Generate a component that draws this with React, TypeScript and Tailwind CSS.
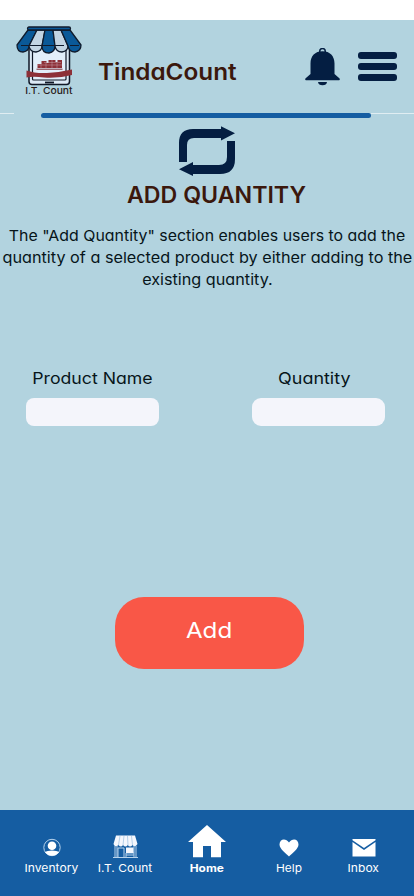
import type { ReactNode } from "react";

function StoreLogo() {
  return (
    <svg width="66" height="60" viewBox="0 0 66 60" fill="none">
      <rect x="13" y="17" width="40.5" height="41.5" rx="3" fill="#dce9f5" stroke="#111827" strokeWidth="1.5" />
      <rect x="16.5" y="22" width="33.5" height="32" rx="1" fill="#e2eefa" stroke="#111827" strokeWidth="1.2" />
      <path d="M29 56.5H38" stroke="#111827" strokeWidth="1.8" />
      <path d="M21.5 42V38h4v-3h5v2h2v-3h7v2h2v-2h4.5v8Z" fill="#8d3038" />
      <path d="M21 39h25M28 36.5h17M25 38v4M30 37v5M36 34v8M41 37v5" stroke="#d6b8c3" strokeWidth=".4" />
      <path d="M20.5 43.2h26" stroke="#7a2a35" strokeWidth="1" />
      <path d="M10.5 44.5Q19 47.5 31 47T56 43.5V49Q43 52.5 28 51.5Q17 50 10.5 51.5Z" fill="#8d3038" />
      <g stroke="#101b2c" strokeWidth="1.3" strokeLinejoin="round">
        <path d="M12 4L1 19Q1 26 7 26Q13 25 13 20L21 4Z" fill="#0a5998" />
        <path d="M21 4L13 20Q14 26 20 26Q26 25 26 20L29 4Z" fill="#c3d5e3" />
        <path d="M29 4L26 20Q26 27 33 27Q39 26 39 20L37 4Z" fill="#0a5998" />
        <path d="M37 4L39 20Q40 26 46 26Q52 25 52 20L45 4Z" fill="#c3d5e3" />
        <path d="M45 4L52 20Q53 26 59 26Q65 25 65 19L54 4Z" fill="#0a5998" />
        <path d="M5 19.5H48M54 19.5H63" strokeWidth="1" />
        <rect x="11.5" y="1" width="43" height="3" rx="1.5" fill="#0a5998" />
      </g>
    </svg>
  );
}

function BellIcon() {
  return (
    <svg width="36" height="39" viewBox="0 0 36 39" fill="#041e42">
      <circle cx="17.5" cy="3.3" r="2.8" fill="none" stroke="#041e42" strokeWidth="1.5" />
      <path d="M17.5 3.2C10 3.2 5.5 8 5.5 15.5V26L.4 30.5Q-.2 32.3 1 32.3H34Q35.2 32.3 34.6 30.5L29.5 26V15.5C29.5 8 25 3.2 17.5 3.2Z" />
      <path d="M13 34H22Q21.5 37.3 17.5 37.3T13 34Z" />
    </svg>
  );
}

function LoopIcon() {
  return (
    <svg width="56" height="50" viewBox="0 0 56 50" fill="#041e42">
      <path d="M0 36V17Q0 3 14 3H42V.2L56 7.3L42 14.5V12H15Q8 12 8 19V36Z" />
      <path d="M56 15V33Q56 48 41 48H14V50L0 43.2L14 36V39H40Q48 39 48 31V15Z" />
    </svg>
  );
}

function NavItem({ label, width, text = "", children }: { label: string; width: string; text?: string; children: ReactNode }) {
  return (
    <a className={`flex h-[66px] flex-col items-center justify-end ${width}`}>
      {children}
      <span className={`mt-[2px] whitespace-nowrap text-[11px] leading-[16px] ${text}`}>{label}</span>
    </a>
  );
}

export default function App() {
  return (
    <div className="flex h-[896px] w-[414px] flex-col overflow-hidden bg-[#b2d3df] pt-5 font-[Inter,sans-serif] text-[#07151a] [background-image:linear-gradient(white_20px,transparent_20px)] [font-feature-settings:'cv11'_1]">
      <header className="flex h-[93px] shrink-0">
        <div className="ml-4 flex w-[66px] flex-col items-center pt-[6px]">
          <StoreLogo />
          <span className="-mt-px -ml-[1px] scale-x-[1.08] whitespace-nowrap text-[9.5px] leading-[11px] font-medium text-[#281a19]">I.T. Count</span>
        </div>
        <h1 className="mt-[36px] ml-4 w-[207px] origin-left scale-x-[1.08] whitespace-nowrap text-[22.5px] leading-[32px] font-semibold text-[#3b180d]">TindaCount</h1>
        <div className="mt-[28px]"><BellIcon /></div>
        <div className="mt-[32px] ml-[17px] flex flex-col gap-[4px]">
          <i className="h-[7px] w-[39px] rounded-[3px] bg-[#041e42]" />
          <i className="h-[7px] w-[39px] rounded-[3px] bg-[#041e42]" />
          <i className="h-[7px] w-[39px] rounded-[3px] bg-[#041e42]" />
        </div>
      </header>
      <div className="flex h-[5px] shrink-0 justify-between">
        <div className="h-px w-[14px] bg-[#e0edf2]" />
        <div className="ml-[27px] h-[5px] w-[330px] rounded-full bg-[#155da2]" />
        <div className="h-px w-[43px] bg-[#e0edf2]" />
      </div>
      <main className="flex flex-1 flex-col">
        <div className="mt-[8px] ml-[179px]"><LoopIcon /></div>
        <h2 className="mt-[3px] ml-[127px] origin-left scale-x-[1.03] whitespace-nowrap text-[22.5px] leading-[32px] font-semibold text-[#3b180d]">ADD QUANTITY</h2>
        <p className="mt-[14px] flex flex-col items-center whitespace-nowrap text-[15px] leading-[22px]">
          <span className="scale-x-[1.06]">The "Add Quantity" section enables users to add the</span>
          <span className="scale-x-[1.082]">quantity of a selected product by either adding to the</span>
          <span className="scale-x-[1.08]">existing quantity.</span>
        </p>
        <div className="mt-[75px] flex justify-between pr-[29px] pl-[26px]">
          <label className="flex w-[133px] flex-col items-center">
            <span className="scale-x-[1.105] whitespace-nowrap text-[16px] leading-6">Product Name</span>
            <input className="mt-[8px] h-7 w-[133px] rounded-[8px] bg-[#f4f5fb]" />
          </label>
          <label className="flex w-[133px] flex-col items-center">
            <span className="-ml-[9px] scale-x-[1.12] whitespace-nowrap text-[16px] leading-6">Quantity</span>
            <input className="mt-[8px] h-7 w-[133px] rounded-[9px] bg-[#f4f5fb]" />
          </label>
        </div>
        <button className="mt-[171px] ml-[115px] h-[72px] w-[189px] rounded-[29px] bg-[#f95747] pb-[6px] text-[22px] leading-8 text-white">
          <span className="inline-block scale-x-[1.1]">Add</span>
        </button>
      </main>
      <nav className="flex h-[86px] shrink-0 bg-[#155da2] pl-[15px] text-white">
        <NavItem label="Inventory" width="w-[73px]" text="scale-x-[1.1]">
          <svg width="18" height="19" viewBox="0 0 18 19" fill="none" className="mb-px">
            <circle cx="9" cy="9.5" r="8.2" stroke="#b7d3ec" />
            <circle cx="9" cy="7.7" r="4.3" fill="white" />
            <path d="M2 14.2Q4 12.5 9 12.5T16 14.2Q13 17.7 9 17.7T2 14.2Z" fill="white" />
          </svg>
        </NavItem>
        <NavItem label="I.T. Count" width="w-[74px]" text="scale-x-[1.09]">
          <svg width="25" height="23" viewBox="0 0 25 23" fill="none">
            <path d="M3 .5H22L24.5 9Q22 13 19.5 10Q17 13 14.8 10Q12.5 13 10 10Q8 13 5.5 10Q2 13 .5 9Z" fill="#f4f7fd" />
            <path d="M7 1L5.5 10M11 1L10 10M14.5 1L15 10M18.5 1L19.5 10" stroke="#8cb6dc" strokeWidth=".6" />
            <path d="M2 11V22M4 11V22M21 11V22M23 11V22M5 22V13H11V22M0 22.5H25M13 22V18H21M13 20H21" stroke="#b7d3ec" />
            <rect x="13" y="12.5" width="7.5" height="5.5" fill="#f4f7fd" />
          </svg>
        </NavItem>
        <NavItem label="Home" width="w-[90px]" text="scale-x-[1.08] font-bold">
          <svg width="38" height="33" viewBox="0 0 38 33" fill="white"><path d="M19 0L38 17H33V32.3H23V21H15V32.3H5V17H0Z" /></svg>
        </NavItem>
        <NavItem label="Help" width="w-[74px]" text="scale-x-[1.08]">
          <svg width="20" height="18" viewBox="0 0 20 18" fill="white" className="mb-px"><path d="M10 17.5C7 14.5 .5 10 .5 5.5C.5-.5 7-1.3 10 3.5C13-1.3 19.5-.5 19.5 5.5C19.5 10 13 14.5 10 17.5Z" /></svg>
        </NavItem>
        <NavItem label="Inbox" width="w-[75px]" text="scale-x-[1.1]">
          <svg width="24" height="18" viewBox="0 0 24 18" fill="white" className="mb-px"><path d="M.5 0H23.5V1.3L12 9L.5 1.3Z" /><path d="M.5 3L12 11L23.5 3V17.5H.5Z" /></svg>
        </NavItem>
      </nav>
    </div>
  );
}
